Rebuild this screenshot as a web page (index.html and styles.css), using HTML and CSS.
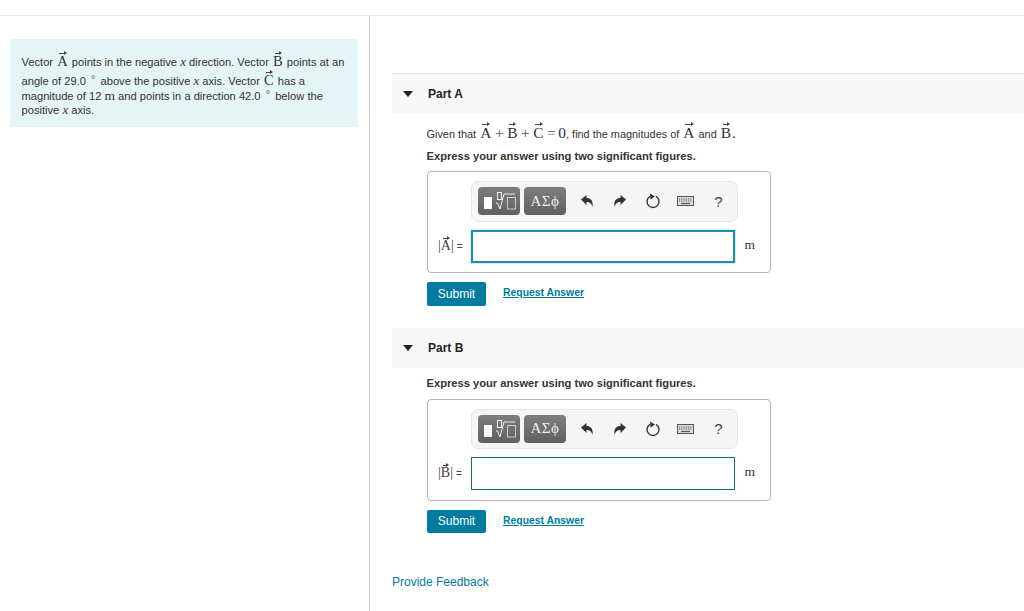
FILE: index.html
```html
<!DOCTYPE html>
<html lang="en">
<head>
<meta charset="utf-8">
<title>Vectors</title>
<link rel="stylesheet" href="styles.css">
</head>
<body>
<div class="topbar"></div>
<main class="main">
  <aside class="left">
    <div class="intro">
      <div class="line l1">Vector <span class="vec">A</span> points in the negative <i class="mi">x</i> direction. Vector <span class="vec">B</span> points at an</div>
      <div class="line l2">angle of 29.0 <sup class="deg">°</sup> above the positive <i class="mi">x</i> axis. Vector <span class="vec">C</span> has a</div>
      <div class="line">magnitude of 12 <span class="mr">m</span> and points in a direction 42.0 <sup class="deg">°</sup> below the</div>
      <div class="line">positive <i class="mi">x</i> axis.</div>
    </div>
  </aside>
  <section class="right">
    <header class="part-head"><span class="tri"></span><span class="part-title">Part A</span></header>
    <div class="part-body">
      <p class="given">Given that <span class="vec big">A</span><span class="op">+</span><span class="vec big">B</span><span class="op">+</span><span class="vec big">C</span><span class="op">=</span><span class="mr big">0</span>, find the magnitudes of <span class="vec big">A</span> and <span class="vec big">B</span><span class="mr big">.</span></p>
      <p class="express">Express your answer using two significant figures.</p>
      <div class="box">
        <div class="toolbar">
          <span class="tbtn tpl"><svg width="36" height="24" viewBox="0 0 36 24"><rect x="3" y="8" width="8" height="12" fill="#fff"/><rect x="16.500" y="3.500" width="4" height="7" fill="none" stroke="#eee"/><path d="M15 14h1.500l2.500 6 4-15h11" fill="none" stroke="#eee"/><rect x="26.500" y="8.500" width="8" height="11.500" fill="none" stroke="#ccc"/></svg></span>
          <span class="tbtn sym">ΑΣϕ</span>
          <span class="tool t1"><svg width="14" height="14" viewBox="0 0 14 14"><path d="M1 5.500 6.500 1v3C10.500 4 13.500 6.500 12.500 13 11.500 9.500 10 8 6.500 8v3z" fill="#333"/></svg></span>
          <span class="tool t2"><svg width="14" height="14" viewBox="0 0 14 14"><path d="M13 5.500 7.500 1v3C3.500 4 .5 6.500 1.500 13 2.500 9.500 4 8 7.500 8v3z" fill="#333"/></svg></span>
          <span class="tool t3"><svg width="16" height="16" viewBox="0 0 16 16"><path d="M5 3.300A6 6 0 1 0 11 3.300" fill="none" stroke="#333" stroke-width="1.400"/><path d="M5 0.500 10 3.500 5.500 6.500z" fill="#333"/></svg></span>
          <span class="tool t4"><svg width="17" height="10" viewBox="0 0 17 10"><rect x=".5" y=".5" width="16" height="9" fill="#ddd" stroke="#555"/><path d="M2 3h13M2 5h13" stroke="#555" stroke-dasharray="1 .8"/><path d="M4 7.500h9" stroke="#555" stroke-width="1.200"/></svg></span>
          <span class="tool t5">?</span>
        </div>
        <div class="row">
          <span class="lbl"><span class="bar">|</span><span class="vec">A</span><span class="bar">|</span> <span class="eq">=</span></span>
          <span class="input focus"></span>
          <span class="unit">m</span>
        </div>
      </div>
      <div class="actions">
        <button class="submit" type="button">Submit</button>
        <a class="req" href="#">Request Answer</a>
      </div>
    </div>
    <header class="part-head second"><span class="tri"></span><span class="part-title">Part B</span></header>
    <div class="part-body">
      <p class="express solo">Express your answer using two significant figures.</p>
      <div class="box b2">
        <div class="toolbar">
          <span class="tbtn tpl"><svg width="36" height="24" viewBox="0 0 36 24"><rect x="3" y="8" width="8" height="12" fill="#fff"/><rect x="16.500" y="3.500" width="4" height="7" fill="none" stroke="#eee"/><path d="M15 14h1.500l2.500 6 4-15h11" fill="none" stroke="#eee"/><rect x="26.500" y="8.500" width="8" height="11.500" fill="none" stroke="#ccc"/></svg></span>
          <span class="tbtn sym">ΑΣϕ</span>
          <span class="tool t1"><svg width="14" height="14" viewBox="0 0 14 14"><path d="M1 5.500 6.500 1v3C10.500 4 13.500 6.500 12.500 13 11.500 9.500 10 8 6.500 8v3z" fill="#333"/></svg></span>
          <span class="tool t2"><svg width="14" height="14" viewBox="0 0 14 14"><path d="M13 5.500 7.500 1v3C3.500 4 .5 6.500 1.500 13 2.500 9.500 4 8 7.500 8v3z" fill="#333"/></svg></span>
          <span class="tool t3"><svg width="16" height="16" viewBox="0 0 16 16"><path d="M5 3.300A6 6 0 1 0 11 3.300" fill="none" stroke="#333" stroke-width="1.400"/><path d="M5 0.500 10 3.500 5.500 6.500z" fill="#333"/></svg></span>
          <span class="tool t4"><svg width="17" height="10" viewBox="0 0 17 10"><rect x=".5" y=".5" width="16" height="9" fill="#ddd" stroke="#555"/><path d="M2 3h13M2 5h13" stroke="#555" stroke-dasharray="1 .8"/><path d="M4 7.500h9" stroke="#555" stroke-width="1.200"/></svg></span>
          <span class="tool t5">?</span>
        </div>
        <div class="row">
          <span class="lbl"><span class="bar">|</span><span class="vec">B</span><span class="bar">|</span> <span class="eq">=</span></span>
          <span class="input"></span>
          <span class="unit">m</span>
        </div>
      </div>
      <div class="actions a2">
        <button class="submit" type="button">Submit</button>
        <a class="req" href="#">Request Answer</a>
      </div>
    </div>
    <a class="feedback" href="#">Provide Feedback</a>
  </section>
</main>
</body>
</html>
```
FILE: styles.css
```css
* { box-sizing: border-box; }
html, body { margin: 0; height: 100%; overflow: hidden; }
body { font-family: "Liberation Sans", Arial, sans-serif; color: #333; background: #fff; font-size: 11px; }
.topbar { height: 16px; border-bottom: 1px solid #e6e6e6; }
.main { display: flex; height: 595px; }
.left { width: 370px; flex: none; border-right: 1px solid #ccc; padding: 23px 0 0 10px; }
.intro { width: 348px; height: 88px; background: #e5f5f6; padding: 14px 0 0 12px; margin-left: 0; }
.line { height: 13.5px; line-height: 13.5px; white-space: nowrap; font-size: 11.15px; margin-left: -.5px; }
.l1 { height: 17px; line-height: 18px; }
.l2 { height: 19px; line-height: 22px; }
.mi { font-family: "Liberation Serif", serif; font-size: 13px; }
.mr { font-family: "Liberation Serif", serif; font-size: 13.5px; }
.deg { font-size: 11px; line-height: 0; vertical-align: 2px; color: #666; margin: 0 2px; }
.vec { position: relative; display: inline-block; font-family: "Liberation Serif", serif; font-size: 14.5px; line-height: 1; margin: 0 1px; }
.vec::before { content: ""; position: absolute; left: 2px; right: 2px; top: -1px; border-top: 1px solid #444; }
.vec::after { content: ""; position: absolute; right: 1px; top: -3px; border-left: 3px solid #444; border-top: 2px solid transparent; border-bottom: 2px solid transparent; }
.big { font-size: 15.5px; }
.mr.big { font-size: 15.5px; }
.op { font-family: "Liberation Serif", serif; font-size: 15.5px; margin: 0 2.5px; color: #555; }
.right { flex: 1; padding: 57px 0 0 22px; min-width: 0; }
.part-head { display: flex; align-items: center; height: 40px; background: #f8f8f8; border-top: 1px solid #e5e5e5; padding-left: 11px; }
.part-head.second { margin-top: 22px; border-top: 0; }
.tri { width: 0; height: 0; border-left: 5px solid transparent; border-right: 5px solid transparent; border-top: 6px solid #222; margin-right: 15px; }
.part-title { font-weight: bold; font-size: 12px; color: #222; }
.part-body { padding-left: 35px; }
p { margin: 0; }
.given { height: 20px; margin-top: 9.5px; margin-bottom: .5px; line-height: 20px; font-size: 10.9px; white-space: nowrap; margin-left: -.5px; }
.express { margin-top: 6px; height: 14px; line-height: 14px; font-weight: bold; font-size: 11.15px; color: #333; margin-left: -.5px; }
.express.solo { margin-top: 8px; }
.box { width: 344px; height: 102px; margin-top: 8px; border: 1px solid #b5b5b5; border-radius: 4px; padding: 9px 0 0 43px; }
.b2 { margin-top: 9px; }
.toolbar { width: 267px; height: 41px; display: flex; align-items: center; background: #f5f5f5; border: 1px solid #e6e6e6; border-radius: 7px; padding-left: 6px; gap: 4px; }
.b2 .toolbar { height: 40px; }
.tbtn { width: 42px; height: 28px; border-radius: 4px; background: linear-gradient(#7e7e7e, #606060); color: #eee; display: flex; align-items: center; justify-content: center; flex: none; }
.sym { font-family: "Liberation Serif", serif; font-size: 15px; letter-spacing: .5px; }
.tool { flex: none; width: 33px; display: flex; justify-content: center; align-items: center; color: #444; font-size: 15px; }
.tool:not(.t1) { margin-left: -4px; }
.row { display: flex; align-items: center; height: 33px; margin-top: 8px; margin-left: -33px; }
.lbl { width: 33px; font-size: 10.5px; white-space: nowrap; color: #444; }
.bar { font-family: "Liberation Serif", serif; font-size: 14px; }
.lbl .vec { margin: 0; font-size: 14px; }
.eq { font-size: 10px; }
.input { width: 264px; height: 33px; border: 1px solid #0d6f8a; background: #fff; flex: none; }
.input.focus { border: 2px solid #1d8fae; box-shadow: 0 0 1px #1d8fae; }
.unit { margin-left: 9.5px; font-family: "Liberation Serif", serif; font-size: 13.5px; color: #333; position: relative; top: -1px; }
.actions { display: flex; align-items: center; margin-top: 9px; height: 24px; }
.a2 { height: 23px; }
.submit { width: 59px; height: 24px; background: #007c9e; color: #fff; border: 0; border-radius: 2px; padding: 0; font: 12px "Liberation Sans", Arial, sans-serif; flex: none; }
.a2 .submit { height: 23px; }
.req { margin-left: 17px; color: #007c9e; font-weight: bold; font-size: 10.4px; position: relative; top: -1px; }
.feedback { display: block; margin-top: 41px; color: #007c9e; font-size: 12px; text-decoration: none; line-height: 16px; }
```
